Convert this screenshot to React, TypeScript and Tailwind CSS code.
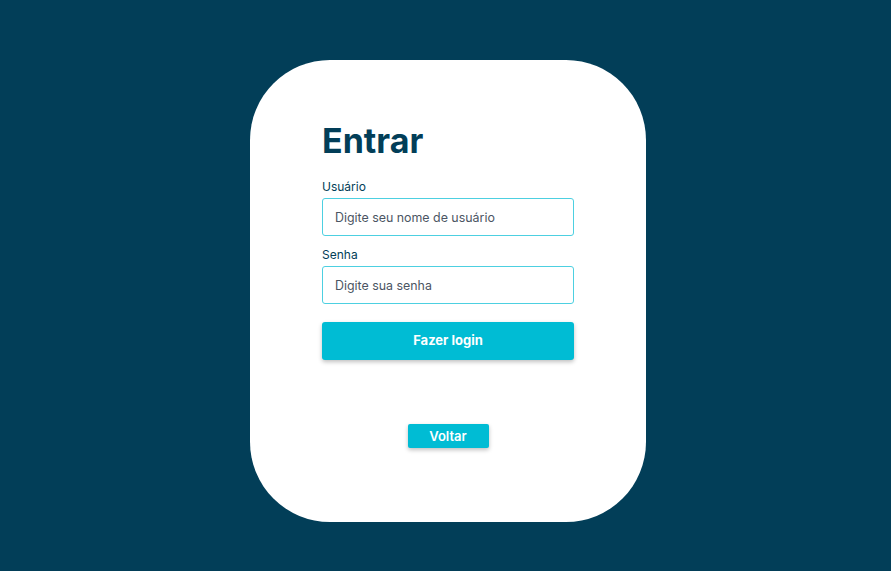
export default function App() {
  return (
    <div
      className="flex min-h-[571px] w-full items-start justify-center bg-[#023e58] pl-[5px] pt-[60px]"
      style={{ fontFamily: 'Inter, "Noto Sans", sans-serif' }}
    >
      <div className="flex h-[462px] w-[396px] flex-col rounded-[80px] bg-white px-[72px] pt-[61px]">
        <h1 className="text-[34px] font-bold leading-[40px] text-[#023e58]">Entrar</h1>

        <label className="mt-4 mb-px text-[12px] leading-5 text-[#023e58]">Usuário</label>
        <input
          type="text"
          placeholder="Digite seu nome de usuário"
          className="h-[38px] w-full rounded-[3px] border border-[#4dd0e1] px-3 text-[12.4px] text-[#374151] outline-none placeholder:text-[#4b5563]"
        />

        <label className="mt-[9px] mb-px text-[12px] leading-5 text-[#023e58]">Senha</label>
        <input
          type="password"
          placeholder="Digite sua senha"
          className="h-[38px] w-full rounded-[3px] border border-[#4dd0e1] px-3 text-[12.4px] text-[#374151] outline-none placeholder:text-[#4b5563]"
        />

        <button className="mt-[18px] h-[38px] w-full rounded-[3px] bg-[#00bcd4] text-[13px] font-bold text-white shadow-[0_2px_4px_rgba(0,0,0,0.25)]">
          Fazer login
        </button>

        <div className="mt-16 flex justify-center">
          <button className="h-6 w-[81px] rounded-[2px] bg-[#00bcd4] text-[13px] font-semibold leading-6 text-white shadow-[0_2px_4px_rgba(0,0,0,0.25)]">
            Voltar
          </button>
        </div>
      </div>
    </div>
  );
}
